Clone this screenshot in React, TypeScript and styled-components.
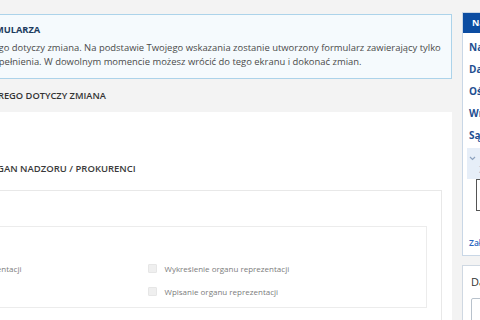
import React from "react";
import styled, { createGlobalStyle } from "styled-components";

const GlobalStyle = createGlobalStyle`
  html, body {
    margin: 0;
    padding: 0;
    overflow: hidden;
    background: #f3f3f3;
    font-family: "Open Sans", "Liberation Sans", sans-serif;
  }
`;

const Page = styled.div`
  display: flex;
  align-items: flex-start;
  gap: 10px;
  margin-left: -173px;
  padding-top: 12px;
  width: 900px;
`;

const Main = styled.div`
  width: 625px;
  min-width: 0;
  flex-shrink: 0;
  padding-top: 2px;
  overflow: hidden;
`;

const InfoBox = styled.div`
  border: 1px solid #acd3ea;
  background: #f5fafd;
  padding: 8px 12px 9px;
  overflow: hidden;
`;

const InfoTitle = styled.div`
  font-size: 9.3px;
  line-height: 14px;
  font-weight: 700;
  color: #1d3d5f;
  margin-bottom: 4px;
  white-space: nowrap;
`;

const InfoText = styled.div`
  font-size: 9.44px;
  line-height: 14px;
  color: #4a4a4a;
  white-space: nowrap;
  margin-left: -2px;
`;

const SectionHeading = styled.div`
  font-size: 9.3px;
  line-height: 14px;
  font-weight: 600;
  color: #333;
  text-transform: uppercase;
  margin: 10px 0 9px;
  padding-left: 21px;
  white-space: nowrap;
`;

const Panel = styled.div`
  background: #fff;
  padding: 50px 10px 0 10px;
  min-height: 220px;
`;

const PanelHeading = styled.div`
  font-size: 9.5px;
  line-height: 14px;
  font-weight: 600;
  color: #3a3a3a;
  text-transform: uppercase;
  padding-left: 31px;
  margin-bottom: 14px;
  white-space: nowrap;
`;

const OuterBox = styled.div`
  border: 1px solid #e8e8e8;
  padding: 35px 14px 40px;
`;

const InnerBox = styled.div`
  border: 1px solid #ececec;
  padding: 30px 14px 4px;
  display: grid;
  grid-template-columns: 1fr 1fr;
  column-gap: 16px;
`;

const CheckRow = styled.label`
  display: flex;
  align-items: center;
  gap: 8px;
  height: 23px;
  font-size: 8px;
  color: #7c7c7c;
  white-space: nowrap;
`;

const Check = styled.span`
  flex: 0 0 9px;
  height: 9px;
  background: #efefef;
  border: 1px solid #e6e6e6;
  box-sizing: border-box;
  border-radius: 1px;
`;

const Sidebar = styled.div`
  width: 240px;
  flex-shrink: 0;
`;

const NavCard = styled.div`
  background: #fff;
  border: 1px solid #c9d7e6;
  padding-bottom: 5px;
`;

const NavHeader = styled.div`
  background: #0c4da2;
  color: #fff;
  font-size: 9px;
  font-weight: 700;
  line-height: 20px;
  padding-left: 9px;
`;

const NavList = styled.div`
  padding-top: 3px;
`;

const NavItem = styled.div`
  font-size: 10px;
  font-weight: 700;
  color: #1f4f91;
  line-height: 22px;
  padding-left: 6px;
  white-space: nowrap;
`;

const Expanded = styled.div`
  margin: 2px 0 0 4px;
  background: #e6eef8;
  height: 31px;
  padding: 4px 0 0 2px;
  box-sizing: border-box;
`;

const ExpandedRow = styled.div`
  display: flex;
  align-items: center;
  gap: 4px;
  font-size: 10px;
  line-height: 12px;
  color: #1f4f91;
  font-weight: 600;
  white-space: nowrap;
`;

const SubLine = styled.div`
  font-size: 9px;
  line-height: 12px;
  color: #9aaecb;
  padding-left: 10px;
`;

const FocusBox = styled.div`
  margin-left: 13px;
  height: 32px;
  border: 1.5px solid #555;
  border-right: none;
  box-sizing: border-box;
  background: #fff;
`;

const AttachLink = styled.div`
  margin-top: 25px;
  padding-left: 6px;
  font-size: 8.5px;
  line-height: 14px;
  font-weight: 600;
  color: #2a67c0;
`;

const FormCard = styled.div`
  margin-top: 9px;
  background: #fff;
  border: 1px solid #cfd8e2;
  padding: 8px 8px 20px;
`;

const FormLabel = styled.div`
  font-size: 11px;
  line-height: 16px;
  color: #333;
  white-space: nowrap;
`;

const Input = styled.div`
  margin-top: 8px;
  height: 24px;
  border: 1px solid #b8c2cc;
  border-radius: 2px;
`;

const Chevron = () => (
  <svg width="7" height="5" viewBox="0 0 7 5">
    <path d="M1 1l2.5 2.5L6 1" fill="none" stroke="#8ea3bf" strokeWidth="1.2" />
  </svg>
);

export default function App() {
  return (
    <>
      <GlobalStyle />
      <Page>
        <Main>
          <InfoBox>
            <InfoTitle>OKREŚLENIE ZAKRESU ZMIAN FORMULARZA</InfoTitle>
            <InfoText>
              Wskaż poniżej obszar wniosku, którego dotyczy zmiana. Na podstawie Twojego wskazania zostanie utworzony formularz zawierający tylko
            </InfoText>
            <InfoText>
              te pola, które będą wymagane do wypełnienia. W dowolnym momencie możesz wrócić do tego ekranu i dokonać zmian.
            </InfoText>
          </InfoBox>
          <SectionHeading>Zaznacz obszar wniosku, którego dotyczy zmiana</SectionHeading>
          <Panel>
            <PanelHeading>Organ reprezentacji / Organ nadzoru / Prokurenci</PanelHeading>
            <OuterBox>
              <InnerBox>
                <CheckRow>
                  <Check />
                  Zmiana członka organu reprezentacji
                </CheckRow>
                <CheckRow>
                  <Check />
                  Wykreślenie organu reprezentacji
                </CheckRow>
                <CheckRow>
                  <Check />
                  Zmiana sposobu reprezentacji
                </CheckRow>
                <CheckRow>
                  <Check />
                  Wpisanie organu reprezentacji
                </CheckRow>
              </InnerBox>
            </OuterBox>
          </Panel>
        </Main>
        <Sidebar>
          <NavCard>
            <NavHeader>Nawigacja</NavHeader>
            <NavList>
              <NavItem>Nazwa i forma prawna</NavItem>
              <NavItem>Dane adresowe</NavItem>
              <NavItem>Oświadczenia</NavItem>
              <NavItem>Wróć do wyboru</NavItem>
              <NavItem>Sąd rejestrowy</NavItem>
            </NavList>
            <Expanded>
              <ExpandedRow>
                <Chevron />
                Sposób reprezentacji
              </ExpandedRow>
              <SubLine>Zarząd</SubLine>
            </Expanded>
            <FocusBox />
            <AttachLink>Załączniki</AttachLink>
          </NavCard>
          <FormCard>
            <FormLabel>Dane kontaktowe</FormLabel>
            <Input />
          </FormCard>
        </Sidebar>
      </Page>
    </>
  );
}
